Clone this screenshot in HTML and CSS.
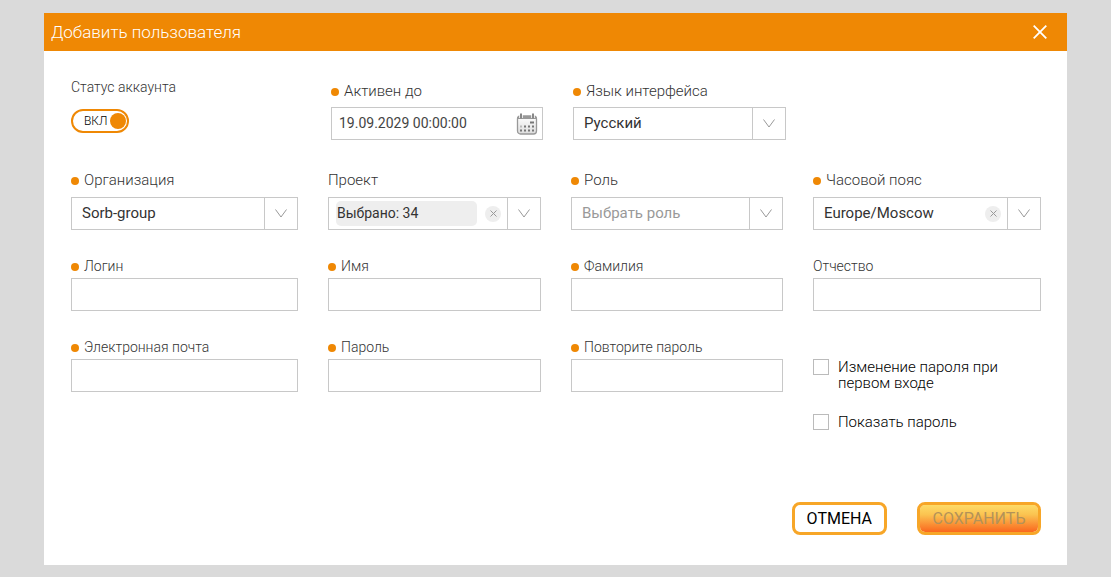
FILE: index.html
```html
<!DOCTYPE html>
<html lang="ru">
<head>
<meta charset="utf-8">
<title>Добавить пользователя</title>
<link rel="stylesheet" href="styles.css">
</head>
<body>
<svg class="sprite" aria-hidden="true">
  <symbol id="chevron" viewBox="0 0 12 9"><path d="M.5 .5 6 8 11.5 .5" fill="none" stroke="currentColor"/></symbol>
  <symbol id="cross" viewBox="0 0 14 14"><path d="M.7.7 13.3 13.3M13.3.7.7 13.3" fill="none" stroke="currentColor" stroke-width="1.8"/></symbol>
  <symbol id="cross-small" viewBox="0 0 7 7"><path d="M.5.5 6.5 6.5M6.5.5.5 6.5" fill="none" stroke="currentColor"/></symbol>
</svg>
<main class="dialog" role="dialog" aria-labelledby="title">
  <header class="dialog-header">
    <h1 class="dialog-title" id="title">Добавить пользователя</h1>
    <button class="close" type="button" aria-label="Закрыть"><svg width="14" height="14"><use href="#cross"/></svg></button>
  </header>
  <form class="dialog-body">
    <div class="row row-top">
      <div class="status">
        <label class="label label-compact" for="status">Статус аккаунта</label>
        <span class="toggle">
          <input class="toggle-input" id="status" type="checkbox" role="switch" checked>
          <span class="toggle-text">ВКЛ</span>
          <span class="toggle-knob"></span>
        </span>
      </div>
      <div class="field field-top">
        <label class="label required" for="active">Активен до</label>
        <div class="control">
          <input class="control-input date" id="active" type="text" value="19.09.2029 00:00:00">
          <button class="calendar" type="button" aria-label="Календарь">
            <svg width="22" height="22" viewBox="0 0 22 22">
              <defs><linearGradient id="page" x2="0" y2="1"><stop offset="0" stop-color="#fff"/><stop offset="1" stop-color="#ddd"/></linearGradient></defs>
              <rect x="1.5" y="3" width="19" height="18" rx="3" fill="url(#page)" stroke="#999" stroke-width="1.3"/>
              <path d="M1.5 6V5.5Q1.5 3 4 3H18Q20.500 3 20.500 5.500V6Z" fill="#999"/>
              <path d="M5 1V5M17 1V5" stroke="#fff" stroke-width="3.500"/>
              <path d="M5 .5V5.500M17 .5V5.500" stroke="#888" stroke-width="2"/>
              <path d="M14 9.500H18" stroke="#777" stroke-width="2"/>
              <path d="M8 13.500H10M12 13.500H14M16 13.500H18M4 17.500H6M8 17.500H10M12 17.500H14M16 17.500H18" stroke="#777" stroke-width="2"/>
              <path d="M4 13.500H6" stroke="#bbb" stroke-width="2"/>
            </svg>
          </button>
        </div>
      </div>
      <div class="field field-top">
        <label class="label required" for="lang">Язык интерфейса</label>
        <div class="control select">
          <select class="control-select" id="lang"><option>Русский</option></select>
          <span class="arrow"><svg width="12" height="9"><use href="#chevron"/></svg></span>
        </div>
      </div>
    </div>

    <div class="row">
      <div class="field">
        <label class="label required" for="org">Организация</label>
        <div class="control select">
          <select class="control-select" id="org"><option>Sorb-group</option></select>
          <span class="arrow"><svg width="12" height="9"><use href="#chevron"/></svg></span>
        </div>
      </div>
      <div class="field">
        <label class="label" for="project">Проект</label>
        <div class="control select">
          <select class="control-select chip" id="project"><option>Выбрано: 34</option></select>
          <button class="clear" type="button" aria-label="Очистить проект"><svg width="7" height="7"><use href="#cross-small"/></svg></button>
          <span class="arrow"><svg width="12" height="9"><use href="#chevron"/></svg></span>
        </div>
      </div>
      <div class="field">
        <label class="label required" for="role">Роль</label>
        <div class="control select">
          <select class="control-select empty" id="role"><option>Выбрать роль</option></select>
          <span class="arrow"><svg width="12" height="9"><use href="#chevron"/></svg></span>
        </div>
      </div>
      <div class="field">
        <label class="label required" for="zone">Часовой пояс</label>
        <div class="control select">
          <select class="control-select" id="zone"><option>Europe/Moscow</option></select>
          <button class="clear" type="button" aria-label="Очистить часовой пояс"><svg width="7" height="7"><use href="#cross-small"/></svg></button>
          <span class="arrow"><svg width="12" height="9"><use href="#chevron"/></svg></span>
        </div>
      </div>
    </div>

    <div class="row row-text">
      <div class="field"><label class="label label-compact required" for="login">Логин</label><div class="control"><input class="control-input" id="login" type="text"></div></div>
      <div class="field"><label class="label label-compact required" for="name">Имя</label><div class="control"><input class="control-input" id="name" type="text"></div></div>
      <div class="field"><label class="label label-compact required" for="surname">Фамилия</label><div class="control"><input class="control-input" id="surname" type="text"></div></div>
      <div class="field"><label class="label label-compact" for="patronymic">Отчество</label><div class="control"><input class="control-input" id="patronymic" type="text"></div></div>
    </div>

    <div class="row row-text">
      <div class="field"><label class="label label-compact required" for="email">Электронная почта</label><div class="control"><input class="control-input" id="email" type="email"></div></div>
      <div class="field"><label class="label label-compact required" for="password">Пароль</label><div class="control"><input class="control-input" id="password" type="password"></div></div>
      <div class="field"><label class="label label-compact required" for="repeat">Повторите пароль</label><div class="control"><input class="control-input" id="repeat" type="password"></div></div>
      <div class="checks">
        <label class="check"><input class="check-box" type="checkbox"><span class="check-text">Изменение пароля при первом входе</span></label>
        <label class="check"><input class="check-box" type="checkbox"><span class="check-text">Показать пароль</span></label>
      </div>
    </div>

    <footer class="actions">
      <button class="button" type="button">ОТМЕНА</button>
      <button class="button button-save" type="submit" disabled>СОХРАНИТЬ</button>
    </footer>
  </form>
</main>
</body>
</html>
```
FILE: styles.css
```css
* { box-sizing: border-box; }

body {
  margin: 0;
  padding: 13px 44px 12px;
  background: #dadada;
  font-family: Roboto, "Liberation Sans", sans-serif;
  font-weight: 300;
  color: #000;
}

button, input, select { font: inherit; color: inherit; margin: 0; }
button { padding: 0; border: 0; background: none; cursor: pointer; }
svg { display: block; }
.sprite { position: absolute; width: 0; height: 0; }

.dialog { background: #fff; }

.dialog-header {
  display: flex;
  align-items: center;
  justify-content: space-between;
  height: 38px;
  padding: 0 20px 0 7px;
  background: #ef8804;
  color: #fff;
}
.dialog-title { margin: 0; font-size: 17px; line-height: 36px; font-weight: 300; }
.close { color: #fff; }

.dialog-body { padding: 26px 26px 30px 27px; }

.row {
  display: grid;
  grid-template-columns: 227fr 213fr 212fr 228fr;
  gap: 30px;
  margin-top: 30px;
}
.row-top { grid-template-columns: 230fr 212fr 213fr 225fr; margin-top: 0; }
.row-text { margin-top: 26px; }

.status { display: flex; flex-direction: column; align-items: flex-start; gap: 12px; }
.field { display: flex; flex-direction: column; gap: 7px; min-width: 0; }
.field-top { padding-top: 4px; gap: 6px; }
.row-text .field { gap: 2px; }

.label {
  display: flex;
  align-items: center;
  gap: 5px;
  font-size: 15px;
  line-height: 20px;
  color: #333;
}
.label-compact { font-size: 14px; }
.required::before {
  content: "";
  width: 8px;
  height: 8px;
  margin-top: 2px;
  border-radius: 50%;
  background: #ef8804;
}

.control {
  display: flex;
  height: 33px;
  border: 1px solid #c8c8c8;
  background: #fff;
  font-size: 15px;
  font-weight: 400;
}
.control-input {
  flex: 1;
  min-width: 0;
  padding: 0 8px;
  border: 0;
  outline: 0;
  background: transparent;
}
.date { padding: 0 7px 2px; font-size: 14px; color: #444; }
.calendar { padding: 0 4px; }

.select { display: grid; grid-template-columns: 1fr auto 33px; align-items: center; }
.control-select {
  grid-area: 1 / 1 / 2 / -1;
  width: 100%;
  height: 31px;
  padding: 0 70px 2px 10px;
  border: 0;
  outline: 0;
  appearance: none;
  background: transparent;
  color: #333;
}
.empty { color: #999; padding-right: 33px; }
.chip {
  grid-area: 1 / 1;
  width: auto;
  height: 25px;
  margin: 0 8px 0 7px;
  padding: 0 1px 2px;
  border-radius: 5px;
  background: #eee;
  font-size: 14px;
}
.arrow {
  grid-area: 1 / 3;
  display: grid;
  place-items: center;
  height: 31px;
  border-left: 1px solid #c8c8c8;
  color: #999;
  pointer-events: none;
}
.clear {
  grid-area: 1 / 2;
  display: grid;
  place-items: center;
  width: 16px;
  height: 16px;
  margin-right: 6px;
  border-radius: 50%;
  background: #eee;
  color: #999;
}

.toggle {
  display: grid;
  grid-template-columns: 1fr 16px;
  align-items: center;
  width: 58px;
  height: 24px;
  padding: 0 1px 0 11px;
  border: 2px solid #ef8804;
  border-radius: 12px;
}
.toggle-input { grid-area: 1 / 1 / 2 / -1; width: 100%; height: 20px; opacity: 0; }
.toggle-text { grid-area: 1 / 1; font-size: 12px; line-height: 20px; pointer-events: none; }
.toggle-knob { grid-area: 1 / 2; height: 16px; border-radius: 50%; background: #ef8804; pointer-events: none; }

.checks { display: flex; flex-direction: column; gap: 23px; padding-top: 22px; }
.check { display: flex; gap: 9px; font-size: 15px; line-height: 16px; }
.check-text { max-width: 180px; }
.check-box {
  flex: none;
  width: 16px;
  height: 16px;
  border: 1px solid #bbb;
  appearance: none;
  background: #fff;
}
.check-box:checked { background: #ef8804; }

.actions { display: flex; justify-content: flex-end; gap: 30px; margin-top: 72px; }
.button {
  min-width: 95px;
  height: 33px;
  padding: 0 12px;
  border: 3px solid #f7a628;
  border-radius: 8px;
  background: #fff;
  font-size: 16px;
  font-weight: 400;
}
.button-save {
  min-width: 124px;
  background: linear-gradient(#fddb67, #fbc451 35%, #fa671e);
  background-clip: padding-box;
  color: #b39259;
  cursor: default;
}
```
